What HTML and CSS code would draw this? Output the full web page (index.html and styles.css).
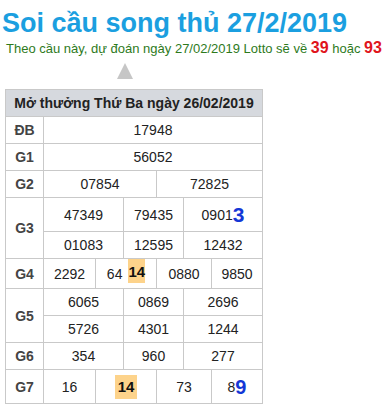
FILE: index.html
```html
<!DOCTYPE html>
<html lang="vi">
<head>
<meta charset="utf-8">
<title>Soi cầu song thủ 27/2/2019</title>
<link rel="stylesheet" href="styles.css">
</head>
<body>
<div class="page">
  <h1 class="title">Soi cầu song thủ 27/2/2019</h1>
  <p class="predict">Theo cầu này, dự đoán ngày 27/02/2019 Lotto sẽ về <b class="hot">39</b> hoặc <b class="hot">93</b></p>
  <div class="pointer"></div>
  <div class="result">
    <div class="head">Mở thưởng Thứ Ba ngày 26/02/2019</div>

    <div class="lbl">ĐB</div>
    <div class="cell full">17948</div>

    <div class="lbl">G1</div>
    <div class="cell full">56052</div>

    <div class="lbl">G2</div>
    <div class="cell h1">07854</div>
    <div class="cell h2">72825</div>

    <div class="lbl two">G3</div>
    <div class="cell t1">47349</div>
    <div class="cell t2">79435</div>
    <div class="cell t3">0901<span class="pick">3</span></div>
    <div class="cell t1">01083</div>
    <div class="cell t2">12595</div>
    <div class="cell t3">12432</div>

    <div class="lbl">G4</div>
    <div class="cell q1">2292</div>
    <div class="cell q2">64<span class="mark top">14</span></div>
    <div class="cell q3">0880</div>
    <div class="cell q4">9850</div>

    <div class="lbl two">G5</div>
    <div class="cell t1">6065</div>
    <div class="cell t2">0869</div>
    <div class="cell t3">2696</div>
    <div class="cell t1">5726</div>
    <div class="cell t2">4301</div>
    <div class="cell t3">1244</div>

    <div class="lbl">G6</div>
    <div class="cell t1">354</div>
    <div class="cell t2">960</div>
    <div class="cell t3">277</div>

    <div class="lbl">G7</div>
    <div class="cell q1">16</div>
    <div class="cell q2"><span class="mark solo">14</span></div>
    <div class="cell q3">73</div>
    <div class="cell q4">8<span class="pick small">9</span></div>
  </div>
</div>
</body>
</html>
```
FILE: styles.css
```css
html, body {
  margin: 0;
  padding: 0;
  background: #ffffff;
}

.page {
  font-family: "Liberation Sans", Arial, sans-serif;
  color: #222222;
}

.title {
  margin: 8px 0 0;
  padding-left: 2px;
  font-size: 27px;
  line-height: 31px;
  font-weight: bold;
  color: #1b9fe0;
  white-space: nowrap;
}

.predict {
  margin: 0;
  padding-left: 6px;
  font-size: 13px;
  line-height: 18px;
  color: #2e7a1c;
  white-space: nowrap;
}

.hot {
  font-size: 16px;
  color: #e0141c;
}

.pointer {
  width: 0;
  height: 0;
  margin: 5px 0 10px 117px;
  border-left: 8px solid transparent;
  border-right: 8px solid transparent;
  border-bottom: 16px solid #c6c6c6;
}

.result {
  display: grid;
  width: max-content;
  margin-left: 5px;
  grid-template-columns: 37px 51px 27px 32px 26px 27px 50px;
  grid-template-rows: 26px 26px 26px 26px 33px 26px 29px 26px 26px 26px 33px;
  gap: 1px;
  padding: 1px;
  background: #c9c9c9;
  font-size: 14px;
}

.result > div {
  background: #ffffff;
  display: flex;
  align-items: center;
  justify-content: center;
  white-space: nowrap;
}

.result > .head {
  grid-column: 1 / -1;
  background: #d6d9de;
  font-weight: bold;
  color: #222222;
}

.lbl {
  grid-column: 1;
  font-weight: bold;
  color: #444444;
}

.lbl.two {
  grid-row: span 2;
}

.full { grid-column: 2 / -1; }
.h1 { grid-column: 2 / 5; }
.h2 { grid-column: 5 / -1; }
.t1 { grid-column: 2 / 4; }
.t2 { grid-column: 4 / 6; }
.t3 { grid-column: 6 / -1; }
.q1 { grid-column: 2 / 3; }
.q2 { grid-column: 3 / 5; }
.q3 { grid-column: 5 / 7; }
.q4 { grid-column: 7 / 8; }

.pick {
  font-size: 21px;
  font-weight: bold;
  color: #1337d6;
  line-height: 24px;
}

.pick.small {
  font-size: 20px;
}

.mark {
  display: inline-block;
  background: #fdd38b;
  font-weight: bold;
  font-size: 15px;
  line-height: 18px;
  padding: 3px 0;
  color: #111111;
}

.mark.top {
  align-self: flex-start;
  margin-left: 6px;
  padding: 4px 0 2px;
}

.mark.solo {
  padding: 3px 3px;
}
```
